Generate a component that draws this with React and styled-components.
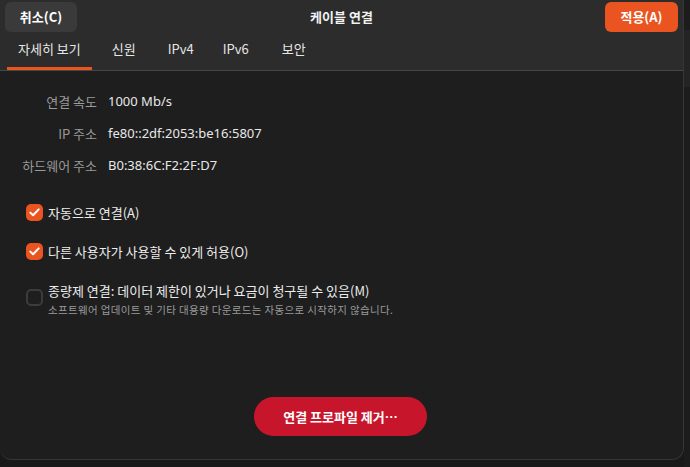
import React from "react";
import styled, { createGlobalStyle } from "styled-components";

const Global = createGlobalStyle`
  html, body { margin: 0; padding: 0; background: #191919; }
  body { width: 690px; height: 467px; overflow: hidden; font-family: "Noto Sans", "Noto Sans CJK KR", sans-serif; }
  #root { display: flex; }
`;

const Stage = styled.div`
  display: flex;
  width: 690px;
  height: 467px;
`;

const Dialog = styled.div`
  width: 684px;
  height: 460px;
  background: #1e1e1e;
  border-right: 1px solid #363636;
  border-bottom: 1px solid #363636;
  border-radius: 0 0 12px 12px;
  display: flex;
  flex-direction: column;
  overflow: hidden;
  box-sizing: border-box;
`;

const Side = styled.div`
  flex: 1;
  display: flex;
  flex-direction: column;
`;

const SideBlock = styled.div`
  height: ${p => p.h}px;
  background: ${p => p.c};
`;

const Header = styled.div`
  background: #2c2c2c;
  border-bottom: 1px solid #474747;
  display: flex;
  flex-direction: column;
`;

const TitleRow = styled.div`
  display: grid;
  grid-template-columns: 1fr auto 1fr;
  align-items: center;
  padding: 1px 5px 0 5px;
  height: 31px;
`;

const Button = styled.button`
  font-family: "Noto Sans CJK KR", "Noto Sans", sans-serif;
  font-weight: 700;
  font-size: 13px;
  color: #ffffff;
  background: ${p => (p.primary ? "#e95420" : "#3a3a3a")};
  border: none;
  border-radius: 6px;
  height: 30px;
  padding: 0 14px;
  justify-self: ${p => (p.primary ? "end" : "start")};
  width: ${p => p.w}px;
`;

const Title = styled.div`
  font-family: "Noto Sans CJK KR", sans-serif;
  font-weight: 700;
  font-size: 13px;
  color: #f2f2f2;
`;

const Tabs = styled.div`
  display: flex;
  padding: 0 0 0 7px;
  height: 38px;
  align-items: stretch;
`;

const Tab = styled.div`
  font-family: "Noto Sans CJK KR", "Noto Sans", sans-serif;
  font-size: 13px;
  color: #e6e6e6;
  padding: 0 ${p => p.px}px;
  display: flex;
  align-items: center;
  padding-bottom: 2px;
  box-sizing: border-box;
  border-bottom: 3px solid ${p => (p.active ? "#e95420" : "transparent")};
`;

const Body = styled.div`
  flex: 1;
  display: flex;
  flex-direction: column;
  padding: 21px 0 0 0;
`;

const InfoGrid = styled.div`
  display: grid;
  grid-template-columns: 97px auto;
  column-gap: 11px;
  row-gap: 13px;
  align-items: center;
  font-size: 13px;
  line-height: 19px;
`;

const Label = styled.div`
  text-align: right;
  color: #9a9a9a;
  font-family: "Noto Sans CJK KR", sans-serif;
`;

const Value = styled.div`
  color: #e8e8e8;
  font-family: "Noto Sans", "Noto Sans CJK KR", sans-serif;
`;

const Checks = styled.div`
  display: flex;
  flex-direction: column;
  padding: 27px 0 0 26px;
  gap: 19px;
`;

const CheckRow = styled.div`
  display: flex;
  gap: 5px;
  align-items: ${p => (p.top ? "flex-start" : "center")};
  min-height: 20px;
  margin-top: ${p => p.mt || 0}px;
`;

const Box = styled.div`
  width: 17px;
  height: 17px;
  border-radius: 5px;
  box-sizing: border-box;
  flex: none;
  display: flex;
  align-items: center;
  justify-content: center;
  background: ${p => (p.on ? "#e95420" : "transparent")};
  border: ${p => (p.on ? "none" : "2px solid #3c3c3c")};
  margin-top: ${p => p.mt || 0}px;
`;

const CheckText = styled.div`
  display: flex;
  flex-direction: column;
  gap: 2px;
`;

const CheckLabel = styled.div`
  font-family: "Noto Sans CJK KR", sans-serif;
  font-size: 13px;
  color: #ececec;
  line-height: 19px;
`;

const SubLabel = styled.div`
  font-family: "Noto Sans CJK KR", sans-serif;
  font-size: 10.5px;
  letter-spacing: 0.35px;
  color: #9a9a9a;
  line-height: 15px;
`;

const Footer = styled.div`
  display: flex;
  justify-content: center;
  margin-top: auto;
  padding: 0 0 23px 0;
`;

const DangerButton = styled.button`
  font-family: "Noto Sans CJK KR", sans-serif;
  font-weight: 700;
  font-size: 13px;
  color: #fff;
  background: #c7162b;
  border: none;
  border-radius: 20px;
  width: 173px;
  height: 39px;
  margin-right: 2px;
`;

const Check = () => (
  <svg width="11" height="9" viewBox="0 0 11 9">
    <path d="M1.3 4.6 L4.1 7.3 L9.7 1.4" fill="none" stroke="#fff" strokeWidth="2" strokeLinecap="round" strokeLinejoin="round" />
  </svg>
);

export default function App() {
  return (
    <>
      <Global />
      <Stage>
        <Dialog>
          <Header>
            <TitleRow>
              <Button w={72}>취소(C)</Button>
              <Title>케이블 연결</Title>
              <Button primary w={73}>적용(A)</Button>
            </TitleRow>
            <Tabs>
              <Tab active px={11}>자세히 보기</Tab>
              <Tab px={20}>신원</Tab>
              <Tab px={12}>IPv4</Tab>
              <Tab px={17}>IPv6</Tab>
              <Tab px={16}>보안</Tab>
            </Tabs>
          </Header>
          <Body>
            <InfoGrid>
              <Label>연결 속도</Label>
              <Value>1000 Mb/s</Value>
              <Label>IP 주소</Label>
              <Value>fe80::2df:2053:be16:5807</Value>
              <Label>하드웨어 주소</Label>
              <Value>B0:38:6C:F2:2F:D7</Value>
            </InfoGrid>
            <Checks>
              <CheckRow>
                <Box on><Check /></Box>
                <CheckLabel>자동으로 연결(A)</CheckLabel>
              </CheckRow>
              <CheckRow>
                <Box on><Check /></Box>
                <CheckLabel>다른 사용자가 사용할 수 있게 허용(O)</CheckLabel>
              </CheckRow>
              <CheckRow top mt={1}>
                <Box mt={8} />
                <CheckText>
                  <CheckLabel>종량제 연결: 데이터 제한이 있거나 요금이 청구될 수 있음(M)</CheckLabel>
                  <SubLabel>소프트웨어 업데이트 및 기타 대용량 다운로드는 자동으로 시작하지 않습니다.</SubLabel>
                </CheckText>
              </CheckRow>
            </Checks>
            <Footer>
              <DangerButton>연결 프로파일 제거…</DangerButton>
            </Footer>
          </Body>
        </Dialog>
        <Side>
          <SideBlock h={30} c="#1c1c1c" />
          <SideBlock h={57} c="#242424" />
          <SideBlock h={380} c="#1c1c1c" />
        </Side>
      </Stage>
    </>
  );
}
